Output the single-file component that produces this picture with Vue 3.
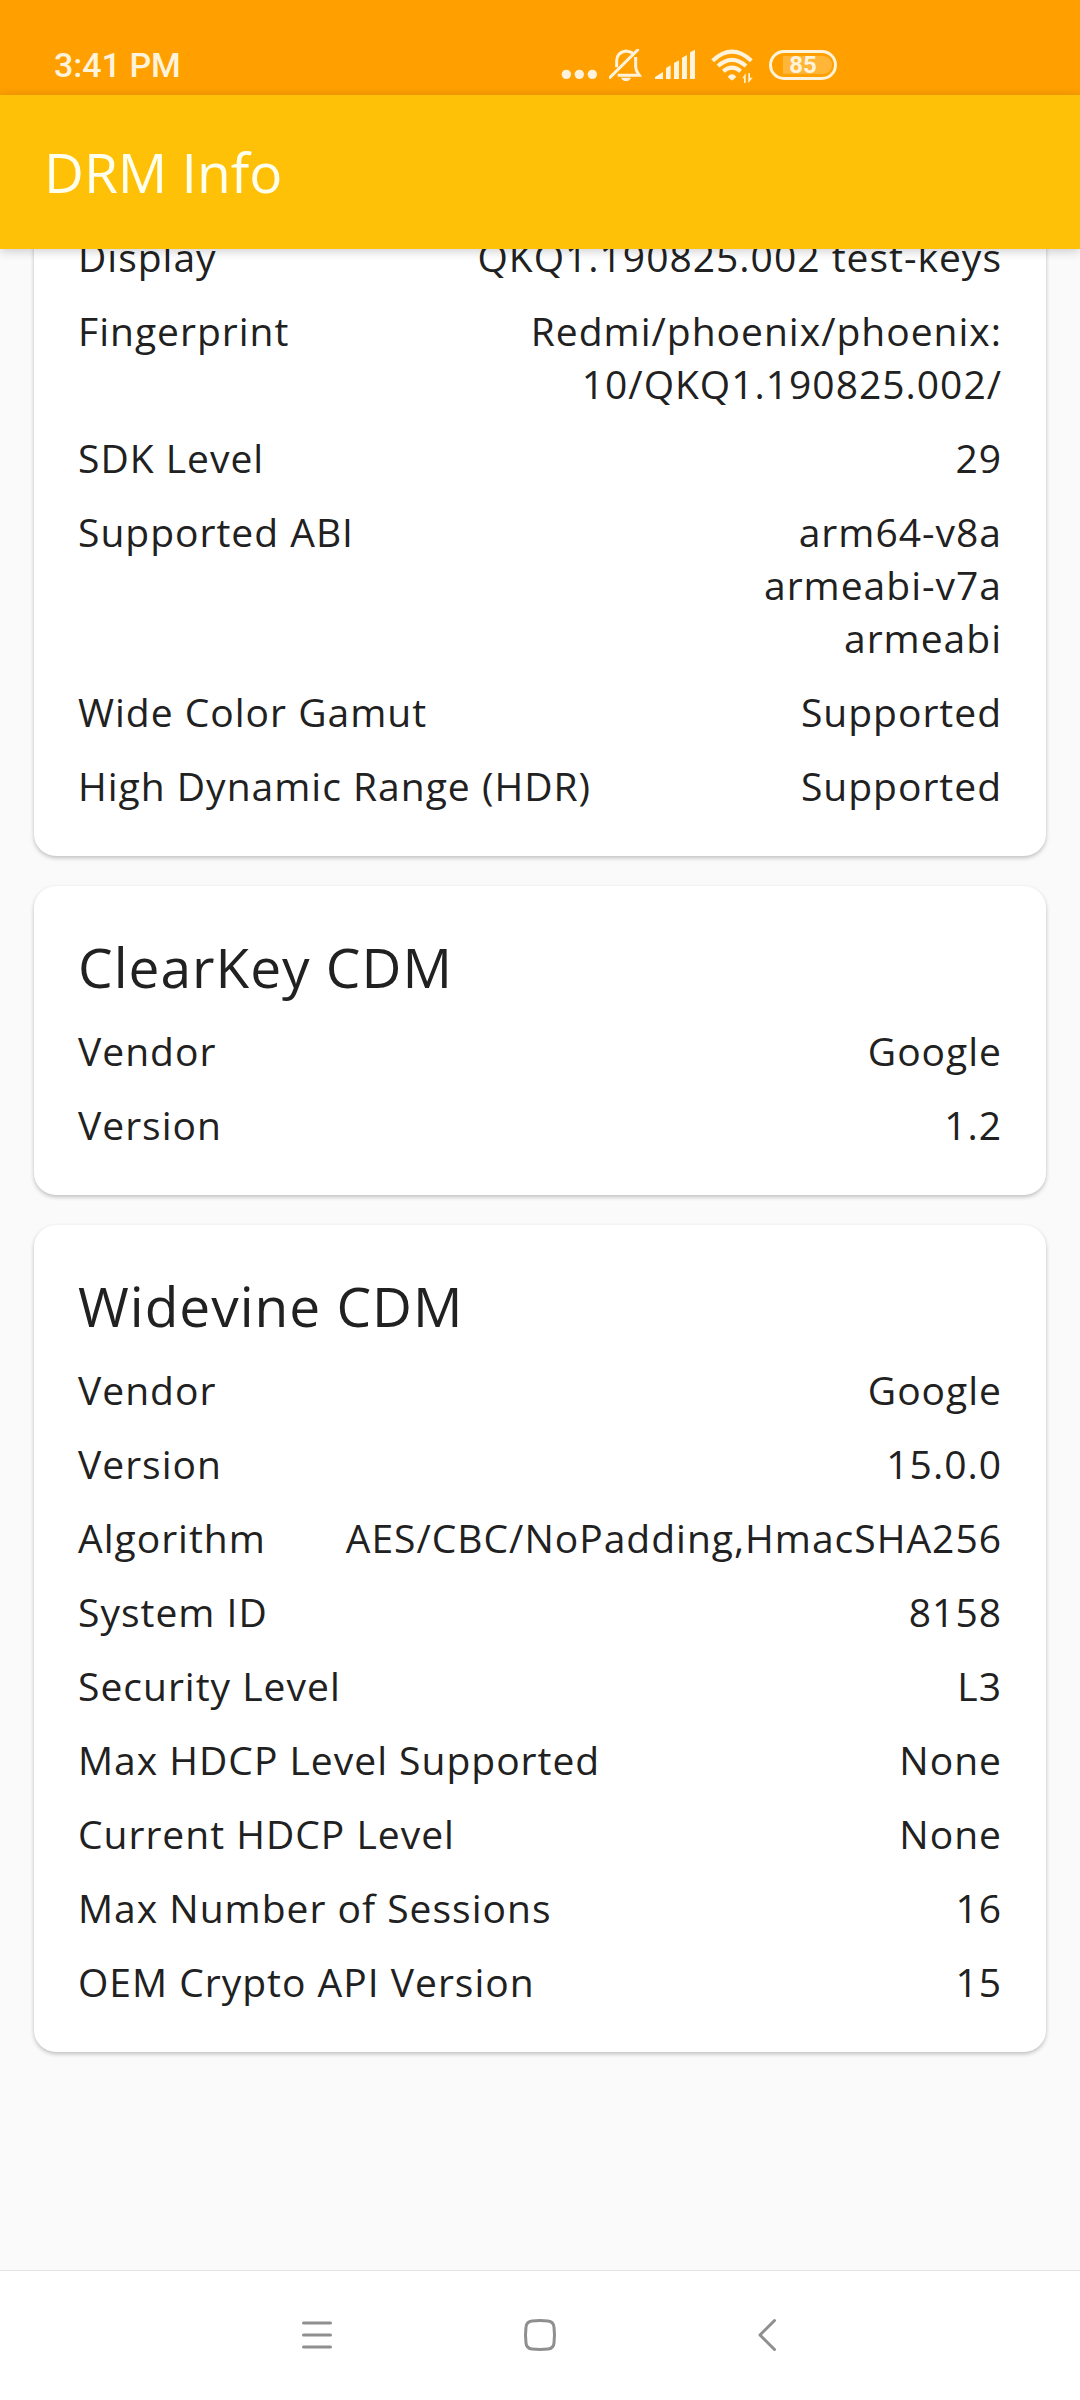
<script setup>
const cards = [
  {
    title: '',
    rows: [
      ['Display', 'QKQ1.190825.002 test-keys'],
      ['Fingerprint', 'Redmi/phoenix/phoenix:\n10/QKQ1.190825.002/'],
      ['SDK Level', '29'],
      ['Supported ABI', 'arm64-v8a\narmeabi-v7a\narmeabi'],
      ['Wide Color Gamut', 'Supported'],
      ['High Dynamic Range (HDR)', 'Supported'],
    ],
  },
  {
    title: 'ClearKey CDM',
    rows: [
      ['Vendor', 'Google'],
      ['Version', '1.2'],
    ],
  },
  {
    title: 'Widevine CDM',
    rows: [
      ['Vendor', 'Google'],
      ['Version', '15.0.0'],
      ['Algorithm', 'AES/CBC/NoPadding,HmacSHA256'],
      ['System ID', '8158'],
      ['Security Level', 'L3'],
      ['Max HDCP Level Supported', 'None'],
      ['Current HDCP Level', 'None'],
      ['Max Number of Sessions', '16'],
      ['OEM Crypto API Version', '15'],
    ],
  },
]
</script>

<template>
  <div class="screen">
    <div class="status">
      <span class="time">3:41 PM</span>
      <div class="tray">
        <svg width="36" height="34" viewBox="63 84 108 102" aria-hidden="true">
          <circle cx="79" cy="160" r="14" />
          <circle cx="118" cy="160" r="14" />
          <circle cx="157" cy="160" r="14" />
        </svg>
        <svg width="34" height="34" viewBox="207 84 102 102" aria-hidden="true">
          <g fill="none" stroke="currentColor" stroke-width="9">
            <path d="M230 139V119C230 103 240 93 258 90C266 91 273 93 279 97" />
            <path d="M287 108V138C287 148 293 155 298 163H233" />
            <path d="M210 169L293 87" stroke-linecap="round" />
          </g>
          <path d="M243 170H273C270 177 265 180 258 180S246 177 243 170Z" />
        </svg>
        <svg width="42" height="34" viewBox="345 84 126 102" aria-hidden="true">
          <path d="M345 174V168L369 153V174Z" />
          <path d="M378 174V141L392 133V174Z" />
          <path d="M402 174V126L417 118V174Z" />
          <path d="M426 174V110L441 102V174Z" />
          <path d="M450 174V94L465 86V174Z" />
        </svg>
        <svg width="48" height="34" viewBox="507 84 144 102" aria-hidden="true">
          <g fill="none" stroke="currentColor" stroke-width="12">
            <path d="M518 119Q576 65 634 119" />
            <path d="M534 135Q576 98 618 135" />
            <path d="M550 151Q576 129 602 151" />
          </g>
          <path d="M563 167Q576 153 589 167L579 177Q576 179 573 177Z" />
          <path d="M607 172L617 157V186H612V172ZM625 157H630V170H638L625 186Z" />
        </svg>
        <div class="battery"><span>85</span></div>
      </div>
    </div>

    <header class="appbar">
      <h1>DRM Info</h1>
    </header>

    <main class="content">
      <div class="list">
        <section v-for="(card, i) in cards" :key="i" class="card">
          <h2 v-if="card.title">{{ card.title }}</h2>
          <dl>
            <div v-for="[name, value] in card.rows" :key="name" class="row">
              <dt>{{ name }}</dt>
              <dd>{{ value }}</dd>
            </div>
          </dl>
        </section>
      </div>
    </main>

    <nav class="navbar">
      <button type="button" aria-label="Recent apps">
        <svg width="40" height="40" viewBox="0 0 40 40">
          <path d="M8.5 8H35.5M8.5 20H35.5M8.5 32H35.5" />
        </svg>
      </button>
      <button type="button" aria-label="Home">
        <svg width="40" height="40" viewBox="0 0 40 40">
          <path d="M12 5.9Q20 5 28 5.9Q33.5 6.5 34 12Q35 20 34 28Q33.5 33.5 28 34.1Q20 35 12 34.1Q6.5 33.5 6 28Q5 20 6 12Q6.5 6.5 12 5.9Z" />
        </svg>
      </button>
      <button type="button" aria-label="Back">
        <svg width="40" height="40" viewBox="0 0 40 40">
          <path d="M29.5 5.5L15 20L29.5 34.5" />
        </svg>
      </button>
    </nav>
  </div>
</template>

<style>
body {
  margin: 0;
  background: #fafafa;
}
</style>

<style scoped>
.screen {
  display: flex;
  flex-direction: column;
  min-height: 100vh;
  background: #fafafa;
  color: #212121;
  font-family: "Open Sans", "Noto Sans", sans-serif;
}

.status {
  display: flex;
  justify-content: space-between;
  align-items: flex-end;
  box-sizing: border-box;
  height: 95px;
  padding: 0 243px 12px 54px;
  background: #ffa000;
  color: #fff3dc;
  font-family: Roboto, sans-serif;
}

.time {
  font-size: 34px;
  line-height: 36px;
  font-weight: 500;
}

.tray {
  display: flex;
  align-items: center;
  gap: 12px;
}

.tray svg {
  fill: currentColor;
}

.battery {
  position: relative;
  display: flex;
  align-items: center;
  justify-content: center;
  box-sizing: border-box;
  width: 68px;
  height: 30px;
  margin-bottom: 2px;
  border: 3px solid currentColor;
  border-radius: 15px;
  font-size: 24px;
  line-height: 24px;
  font-weight: 700;
}

.battery::before {
  content: "";
  position: absolute;
  inset: 3px 2px 3px 11px;
  border-radius: 0 9px 9px 0;
  background: #ffb638;
}

.battery span {
  position: relative;
}

.appbar {
  position: relative;
  z-index: 1;
  display: flex;
  align-items: center;
  height: 154px;
  padding: 0 44px;
  background: #ffc107;
  color: #fffff0;
  box-shadow: 0 2px 10px rgba(0, 0, 0, 0.2);
}

h1,
h2 {
  margin: 0;
  font-size: 55px;
  line-height: 74px;
  font-weight: 400;
}

.content {
  flex: 1;
  overflow: hidden;
}

/* scrolled position: the first card starts above the visible area */
.list {
  display: flex;
  flex-direction: column;
  gap: 30px;
  margin-top: -63px;
  padding: 0 34px 44px;
}

.card {
  padding: 44px;
  border-radius: 22px;
  background: #fff;
  box-shadow: 0 2px 4px rgba(0, 0, 0, 0.24);
}

h2 {
  margin-bottom: 20px;
  letter-spacing: 1px;
}

dl {
  display: flex;
  flex-direction: column;
  gap: 21px;
  margin: 0;
  font-size: 39px;
  line-height: 53px;
  letter-spacing: 1px;
}

.row {
  display: flex;
  justify-content: space-between;
}

dd {
  margin: 0;
  text-align: right;
  white-space: pre-line;
}

.navbar {
  display: flex;
  justify-content: center;
  box-sizing: border-box;
  height: 130px;
  padding-bottom: 2px;
  border-top: 1px solid #e3e3e3;
  background: #fff;
}

.navbar button {
  display: flex;
  align-items: center;
  justify-content: center;
  width: 225px;
  padding: 0;
  border: 0;
  background: none;
}

.navbar svg {
  fill: none;
  stroke: #8f8f8f;
  stroke-width: 3;
  stroke-linecap: round;
  stroke-linejoin: round;
}
</style>
